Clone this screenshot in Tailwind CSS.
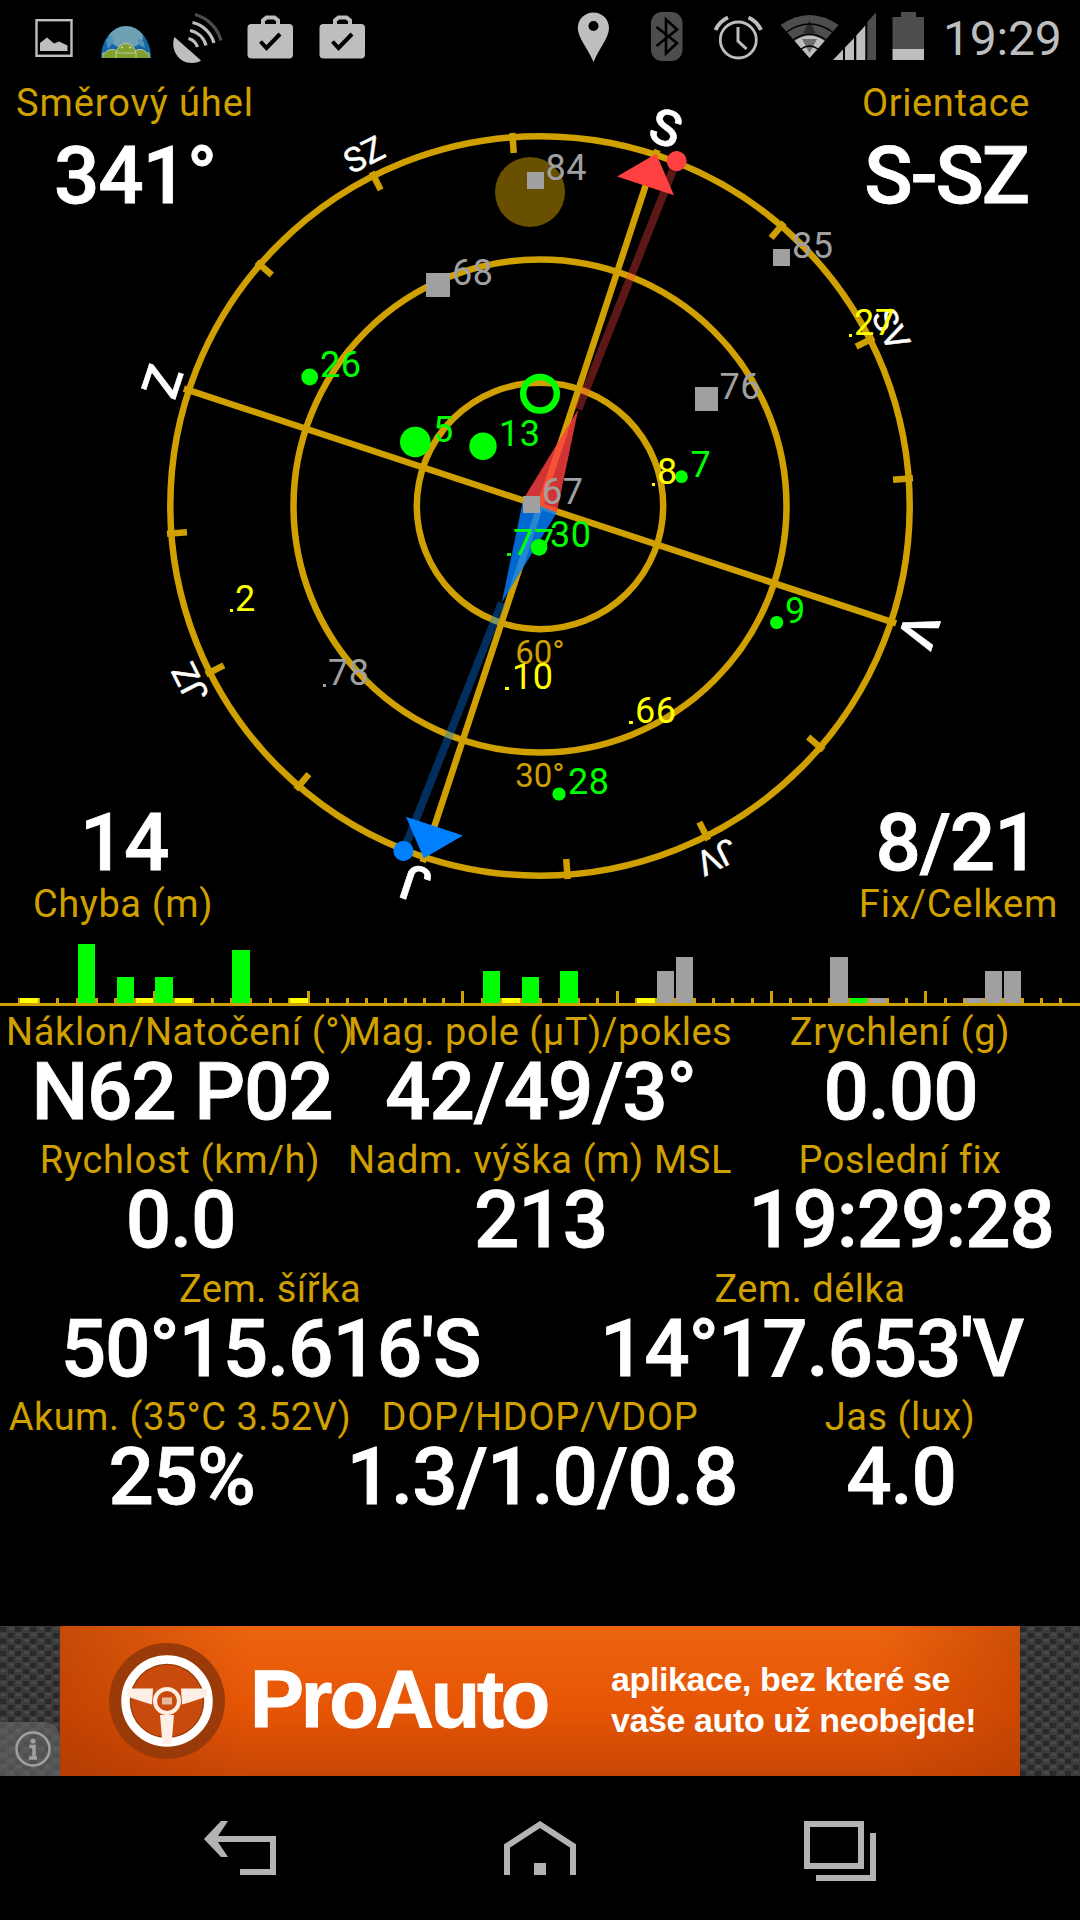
<!DOCTYPE html>
<html lang="cs">
<head>
    <meta charset="UTF-8">
    <meta name="viewport" content="width=device-width, initial-scale=1.0">
    <title>GPS Status</title>
    <script src="https://cdn.jsdelivr.net/npm/@tailwindcss/browser@4"></script>
</head>
<body class="bg-black w-[1080px] h-[1920px] overflow-hidden flex flex-col font-[Roboto,sans-serif]">

    <!-- Status bar -->
    <header class="h-[75px] shrink-0 flex justify-between">
        <svg class="w-[380px] h-[75px]" viewBox="0 0 380 75">
            <rect x="36.5" y="20.2" width="35" height="35.6" fill="none" stroke="#bebebe" stroke-width="2.4" />
            <path d="M40 51V43l7-5.5 7 6 5-2 8.5 4V51z" fill="#bebebe" />
            <!-- globe with androids -->
            <clipPath id="globe"><path d="M101 58a25 32 0 0 1 50 0z" /></clipPath>
            <g clip-path="url(#globe)">
                <rect x="100" y="25" width="52" height="34" fill="#1268a6" />
                <ellipse cx="126" cy="37" rx="17" ry="11" fill="#6fa0b4" />
                <path d="M106 40l5-5 3 6-6 8zM138 38l6 4 1 6-7-4z" fill="#4f93ba" />
                <g fill="#82a02f" stroke="#c3cfa2" stroke-width=".9">
                    <path d="M103 59v-6h2a8 7 0 0 1 14 0v6zM149 59v-6h-2a8 7 0 0 0-14 0v6z" />
                    <path d="M116 59v-7h20v7z" />
                    <path d="M116.500 53a9.500 9.500 0 0 1 19 0z" />
                </g>
                <circle cx="122" cy="47.500" r="1" fill="#ddd" />
                <circle cx="130" cy="47.500" r="1" fill="#ddd" />
            </g>
            <!-- dish -->
            <path d="M174.500 37C170 49 178 63 192 63c4 0 7-1 9-2.500z" fill="#bebebe" />
            <g fill="none" stroke="#bebebe" stroke-width="3.200">
                <path d="M188.500 38.500a13 13 0 0 1 9 8.500" />
                <path d="M190 30.500a21 21 0 0 1 16 15" />
                <path d="M192.500 22.500a29 29 0 0 1 21.500 20.500" />
                <path d="M195 14.500a37 37 0 0 1 26 26" stroke="#4d4d4d" />
            </g>
            <!-- store updates -->
            <g id="bag">
                <path d="M263 25v-4.500l3.500-3h8l3.500 3V25" fill="none" stroke="#bebebe" stroke-width="4" />
                <rect x="247.500" y="24" width="45.500" height="34.500" rx="4" fill="#bebebe" />
                <path d="M260.500 41.500l6 6.500 13.500-14" fill="none" stroke="#000" stroke-width="4" />
            </g>
            <use href="#bag" x="72" />
        </svg>
        <div class="flex">
            <svg class="w-[366px] h-[75px]" viewBox="570 0 366 75">
                <path fill-rule="evenodd" d="M593.500 12.500c-9 0-15.700 7-15.700 15.500 0 10 10 20 15.700 34 5.700-14 15.500-24 15.500-34 0-8.500-6.700-15.500-15.500-15.500zm0 8.500a5 5 0 1 1 0 10 5 5 0 0 1 0-10z" fill="#bebebe" />
                <rect x="651" y="12" width="31.500" height="49" rx="11" fill="#4d4d4d" />
                <path d="M656.500 27l20.500 16-11 10.500V19.500L677 29.500 656.500 46" fill="none" stroke="#000" stroke-width="2.600" />
                <g fill="none" stroke="#bebebe">
                    <circle cx="738.300" cy="40" r="18" stroke-width="2.800" />
                    <path d="M715.500 30a25 25 0 0 1 12.500-12.500M761 30a25 25 0 0 0-12.500-12.500" stroke-width="4" />
                    <path d="M738 27v14l8.500 8" stroke-width="3" />
                </g>
                <!-- wifi -->
                <path d="M809.600 58L780.600 25q29-20 58 0z" fill="#4d4d4d" />
                <path d="M809.600 58l-15-17q15-11 30 0z" fill="#bebebe" />
                <path d="M802 39h15l-7.500 14z" fill="#6e6e6e" />
                <path d="M809.500 20l-6 13h12z" fill="#2b2b2b" />
                <g fill="none" stroke="#000" stroke-width="1.400">
                    <path d="M786.500 32q23-16 46 0M793.500 39.500q16-10.500 32 0M801 49q8.500-6 17 0" />
                </g>
                <!-- signal -->
                <path d="M833 60l10-10.500V60zM845 60V47.500l9-9.500v22zM856.300 60V35.500l9-10V60z" fill="#bebebe" />
                <path d="M867.300 60V22l8.700-9.500V60z" fill="#4d4d4d" />
                <!-- battery -->
                <path d="M892.500 17h8.500v-5h15v5h8v32h-31.500z" fill="#4d4d4d" />
                <rect x="892.500" y="49" width="31.500" height="11" fill="#bebebe" />
            </svg>
            <span class="w-[144px] pl-[7px] text-[48px] leading-[78px] tracking-[-0.2px] text-[#bebebe]">19:29</span>
        </div>
    </header>

    <main class="h-[1551px] shrink-0">
        <!-- Radar -->
        <section class="grid h-[856px]">
            <svg class="col-start-1 row-start-1 w-[1080px] h-[856px]" viewBox="0 75 1080 856">
                <g transform="translate(540 506)" fill="none" stroke="#d0a000" stroke-width="6.500">
                    <circle r="369.700" />
                    <circle r="246.500" />
                    <circle r="123.200" />
                    <g transform="rotate(18.250)">
                        <path d="M0-375V375M-375 0H375" />
                        <g id="ticks">
                            <path d="M0-374v20" transform="rotate(22.500)" />
                            <path d="M0-374v20" transform="rotate(45)" />
                            <path d="M0-374v20" transform="rotate(67.500)" />
                        </g>
                        <use href="#ticks" transform="rotate(90)" />
                        <use href="#ticks" transform="rotate(180)" />
                        <use href="#ticks" transform="rotate(270)" />
                    </g>
                </g>
                <g fill="#d0a000" font-size="33" text-anchor="middle">
                    <text x="540" y="663.500">60°</text>
                    <text x="540" y="786.500">30°</text>
                </g>

                <g transform="translate(540 506) rotate(18.250)" fill="#fff" stroke="#fff" text-anchor="middle">
                    <g font-size="50" font-weight="500" stroke-width=".6">
                        <text x="1" y="-381">S</text>
                        <text y="-381" transform="rotate(90)">V</text>
                        <text y="-380" transform="rotate(180)">J</text>
                        <text y="-380" transform="rotate(270)">Z</text>
                    </g>
                    <g font-size="34" stroke-width=".5">
                        <text y="-381" transform="rotate(45)">SV</text>
                        <text y="-381" transform="rotate(135)">JV</text>
                        <text y="-380" transform="rotate(225)">JZ</text>
                        <text x="1" y="-381" transform="rotate(315)">SZ</text>
                    </g>
                </g>

                <!-- compass needle -->
                <g transform="translate(540 506) rotate(21.600)">
                    <path d="M0-104V-371" stroke="#ff4040" stroke-width="8" opacity=".37" />
                    <path d="M0 104V371" stroke="#0080ff" stroke-width="8" opacity=".37" />
                    <path d="M-18 0L0-104 18 0z" fill="#ff4040" opacity=".82" />
                    <path d="M-18 0L0 104 18 0z" fill="#0080ff" opacity=".82" />
                    <circle cy="-371" r="10" fill="#ff4040" />
                    <circle cy="371" r="10" fill="#0080ff" />
                </g>
                <g transform="translate(540 506) rotate(18.250)">
                    <path d="M0-371l30 34h-60z" fill="#ff4040" />
                    <path d="M0 371l30-34h-60z" fill="#0080ff" />
                </g>
                <circle cx="530" cy="192" r="35" fill="#d0a000" opacity=".5" />
                <circle cx="540" cy="393.700" r="16.800" fill="none" stroke="#0f0" stroke-width="6.500" />

                <!-- satellites -->
                <g fill="#a0a0a0" font-size="36" letter-spacing=".5">
                    <rect x="527" y="172" width="17" height="17" /><text x="545.500" y="180">84</text>
                    <rect x="426" y="273" width="24" height="24" /><text x="452" y="285">68</text>
                    <rect x="773" y="249" width="17" height="17" /><text x="792" y="258">85</text>
                    <rect x="695" y="387" width="23" height="24" /><text x="719.500" y="399">76</text>
                    <rect x="523" y="496" width="17" height="17" /><text x="542" y="504">67</text>
                    <rect x="323" y="684" width="3" height="3" /><text x="328" y="685">78</text>
                </g>
                <g fill="#0f0" font-size="36" letter-spacing=".5">
                    <circle cx="309.700" cy="377" r="8.400" /><text x="320" y="377">26</text>
                    <circle cx="415.300" cy="442" r="15.300" /><text x="433" y="442">5</text>
                    <circle cx="483" cy="446.300" r="13.700" /><text x="499" y="446">13</text>
                    <circle cx="681.500" cy="476.700" r="6.400" /><text x="690.500" y="477">7</text>
                    <circle cx="776.700" cy="622.500" r="6.600" /><text x="785" y="622.500">9</text>
                    <circle cx="559" cy="794" r="6.600" /><text x="568" y="794">28</text>
                    <rect x="507" y="553" width="4" height="3" /><text x="513" y="555">77</text>
                    <circle cx="539" cy="547.300" r="8.400" /><text x="550" y="547">30</text>
                </g>
                <g fill="#ff0" font-size="36" letter-spacing=".5">
                    <rect x="849" y="334" width="3" height="3" /><text x="854" y="335">27</text>
                    <rect x="652" y="483" width="3" height="3" /><text x="657" y="484">8</text>
                    <rect x="230" y="609" width="3" height="3" /><text x="235" y="611">2</text>
                    <rect x="505" y="687" width="4" height="3" /><text x="512" y="689">10</text>
                    <rect x="629" y="721" width="4" height="3" /><text x="635" y="722.500">66</text>
                </g>
            </svg>
            <div class="col-start-1 row-start-1 flex flex-col justify-between pt-[3px] text-center">
                <div class="flex justify-between">
                    <div class="w-[270px]">
                        <p class="text-[38px] leading-[50px] tracking-[0.9px] text-[#d0a000]">Směrový úhel</p>
                        <p class="mt-[13px] text-[80px] leading-[70px] font-medium tracking-[-1.2px] text-white [-webkit-text-stroke:0.8px_#fff]">341°</p>
                    </div>
                    <div class="w-[268px]">
                        <p class="text-[38px] leading-[50px] tracking-[0.6px] text-[#d0a000]">Orientace</p>
                        <p class="mt-[13px] text-[80px] leading-[70px] font-medium tracking-[-2.2px] text-white [-webkit-text-stroke:0.8px_#fff]">S-SZ</p>
                    </div>
                </div>
                <div class="flex justify-between">
                    <div class="w-[246px]">
                        <p class="mb-[1px] pl-[2px] text-[80px] leading-[70px] font-medium tracking-[-1.2px] text-white [-webkit-text-stroke:0.8px_#fff]">14</p>
                        <p class="mb-[2px] text-[38px] leading-[50px] tracking-[0.6px] text-[#d0a000]">Chyba (m)</p>
                    </div>
                    <div class="w-[243px]">
                        <p class="mb-[1px] mr-[3px] text-[80px] leading-[70px] font-medium tracking-[-1.2px] text-white [-webkit-text-stroke:0.8px_#fff]">8/21</p>
                        <p class="mb-[2px] text-[38px] leading-[50px] tracking-[0.8px] text-[#d0a000]">Fix/Celkem</p>
                    </div>
                </div>
            </div>
        </section>

        <!-- Signal levels -->
        <svg class="block w-[1080px] h-[76px]" viewBox="0 931 1080 76" shape-rendering="crispEdges">
            <g stroke="#d0a000">
                <path d="M17.800 1001H1070" stroke-width="6" stroke-dasharray="3 16.286" />
                <path d="M152.800 997.500H940" stroke-width="13" stroke-dasharray="3 151.286" />
            </g>
            <g fill="#0f0">
                <rect x="78" y="944" width="17" height="60" />
                <rect x="117" y="977" width="17" height="27" />
                <rect x="155" y="977" width="18" height="27" />
                <rect x="232" y="950" width="18" height="54" />
                <rect x="483" y="971" width="17" height="33" />
                <rect x="522" y="977" width="17" height="27" />
                <rect x="560" y="971" width="18" height="33" />
                <rect x="850" y="998" width="17" height="6" />
            </g>
            <g fill="#ff0">
                <rect x="20" y="998" width="18" height="6" />
                <rect x="136" y="998" width="17" height="6" />
                <rect x="175" y="998" width="17" height="6" />
                <rect x="290" y="998" width="18" height="6" />
                <rect x="502" y="998" width="18" height="6" />
                <rect x="637" y="998" width="18" height="6" />
            </g>
            <g fill="#a0a0a0">
                <rect x="657" y="971" width="17" height="33" />
                <rect x="676" y="957" width="17" height="47" />
                <rect x="830" y="957" width="18" height="47" />
                <rect x="869" y="998" width="17" height="6" />
                <rect x="965" y="998" width="18" height="6" />
                <rect x="985" y="971" width="17" height="33" />
                <rect x="1004" y="971" width="17" height="33" />
            </g>
            <rect y="1003" width="1080" height="3" fill="#d0a000" />
        </svg>

        <!-- Readings -->
        <dl class="grid grid-cols-6 auto-rows-[128.4px] text-center whitespace-nowrap">
            <div class="col-span-2 flex flex-col items-center">
                <dt class="text-[38px] leading-[50px] tracking-[0.6px] text-[#d0a000]">Náklon/Natočení (°)</dt>
                <dd class="pl-[4px] text-[80px] leading-[70px] font-medium tracking-[-1.2px] text-white [-webkit-text-stroke:0.8px_#fff]">N62 P02</dd>
            </div>
            <div class="col-span-2 flex flex-col items-center">
                <dt class="text-[38px] leading-[50px] tracking-[0.5px] text-[#d0a000]">Mag. pole (µT)/pokles</dt>
                <dd class="pl-[1px] text-[80px] leading-[70px] font-medium tracking-[-1.2px] text-white [-webkit-text-stroke:0.8px_#fff]">42/49/3°</dd>
            </div>
            <div class="col-span-2 flex flex-col items-center">
                <dt class="text-[38px] leading-[50px] tracking-[0.7px] text-[#d0a000]">Zrychlení (g)</dt>
                <dd class="pl-[1px] text-[80px] leading-[70px] font-medium tracking-[-1.2px] text-white [-webkit-text-stroke:0.8px_#fff]">0.00</dd>
            </div>
            <div class="col-span-2 flex flex-col items-center">
                <dt class="text-[38px] leading-[50px] tracking-[0.7px] text-[#d0a000]">Rychlost (km/h)</dt>
                <dd class="pl-[1px] text-[80px] leading-[70px] font-medium tracking-[-1.2px] text-white [-webkit-text-stroke:0.8px_#fff]">0.0</dd>
            </div>
            <div class="col-span-2 flex flex-col items-center">
                <dt class="text-[38px] leading-[50px] tracking-[0.6px] text-[#d0a000]">Nadm. výška (m) MSL</dt>
                <dd class="pl-[1px] text-[80px] leading-[70px] font-medium tracking-[-1.2px] text-white [-webkit-text-stroke:0.8px_#fff]">213</dd>
            </div>
            <div class="col-span-2 flex flex-col items-center">
                <dt class="text-[38px] leading-[50px] tracking-[0.5px] text-[#d0a000]">Poslední fix</dt>
                <dd class="pl-[2px] text-[80px] leading-[70px] font-medium tracking-[-1.2px] text-white [-webkit-text-stroke:0.8px_#fff]">19:29:28</dd>
            </div>
            <div class="col-span-3 flex flex-col items-center">
                <dt class="text-[38px] leading-[50px] tracking-[0.5px] text-[#d0a000]">Zem. šířka</dt>
                <dd class="pl-[1px] text-[80px] leading-[70px] font-medium tracking-[-1.2px] text-white [-webkit-text-stroke:0.8px_#fff]">50°15.616'S</dd>
            </div>
            <div class="col-span-3 flex flex-col items-center">
                <dt class="text-[38px] leading-[50px] tracking-[0.5px] text-[#d0a000]">Zem. délka</dt>
                <dd class="pl-[3px] text-[80px] leading-[70px] font-medium tracking-[-1.2px] text-white [-webkit-text-stroke:0.8px_#fff]">14°17.653'V</dd>
            </div>
            <div class="col-span-2 flex flex-col items-center">
                <dt class="text-[38px] leading-[50px] tracking-[0.5px] text-[#d0a000]">Akum. (35°C 3.52V)</dt>
                <dd class="pl-[3px] text-[80px] leading-[70px] font-medium tracking-[-1.2px] text-white [-webkit-text-stroke:0.8px_#fff]">25%</dd>
            </div>
            <div class="col-span-2 flex flex-col items-center">
                <dt class="text-[38px] leading-[50px] tracking-[0.7px] text-[#d0a000]">DOP/HDOP/VDOP</dt>
                <dd class="pl-[4px] text-[80px] leading-[70px] font-medium tracking-[-1px] text-white [-webkit-text-stroke:0.8px_#fff]">1.3/1.0/0.8</dd>
            </div>
            <div class="col-span-2 flex flex-col items-center">
                <dt class="text-[38px] leading-[50px] tracking-[0.5px] text-[#d0a000]">Jas (lux)</dt>
                <dd class="pl-[2px] text-[80px] leading-[70px] font-medium tracking-[-1.2px] text-white [-webkit-text-stroke:0.8px_#fff]">4.0</dd>
            </div>
        </dl>
    </main>

    <!-- Ad banner -->
    <aside class="h-[150px] shrink-0 flex font-['Liberation_Sans',sans-serif]">
        <svg class="w-[60px] h-[150px]" viewBox="0 0 60 150">
            <defs>
                <pattern id="mesh" width="15" height="12" patternUnits="userSpaceOnUse">
                    <rect width="15" height="12" fill="#3b3b3b" />
                    <path d="M0 1h6v5H0zM8 7h6v5H8z" fill="#292929" />
                    <path d="M9 1h5v3H9zM1 7h5v3H1z" fill="#484848" />
                </pattern>
            </defs>
            <rect width="60" height="150" fill="url(#mesh)" />
            <path d="M0 96h42q18 0 18 18v36H0z" fill="#6a6a6a" opacity=".6" />
            <circle cx="33" cy="123" r="16.500" fill="none" stroke="#a0a0a0" stroke-width="2.500" />
            <circle cx="33" cy="115" r="2.500" fill="#a0a0a0" />
            <path d="M29.500 120.500h4.500V131M29 132h8" fill="none" stroke="#a0a0a0" stroke-width="3.500" />
        </svg>
        <div class="w-[960px] flex items-start bg-[linear-gradient(90deg,#a0320080_0,#a0320000_20%,#a0320000_85%,#b03a0080_100%),linear-gradient(180deg,#ec640f_0,#e65505_55%,#c94706_100%)]">
            <svg class="w-[190px] h-[150px]" viewBox="60 1626 190 150">
                <circle cx="167" cy="1701" r="58" fill="#9a3a08" />
                <circle cx="167" cy="1701" r="36" fill="#c84a0c" />
                <circle cx="167" cy="1701" r="41.500" fill="none" stroke="#fff" stroke-width="8.500" />
                <path d="M127 1688.500h26l-1 16-7-2-18-6zM207 1688.500h-26l1 16 7-2 18-6zM160 1715h14l-2.500 29h-9z" fill="#fdeee6" />
                <circle cx="167" cy="1701" r="12" fill="#c84a0c" stroke="#fdeee6" stroke-width="4" />
                <rect x="162" y="1697.500" width="10" height="7" fill="#e8b9a2" />
            </svg>
            <p class="w-[301px] mt-[26px] text-[81px] leading-[95px] font-bold tracking-[-3.2px] text-white [-webkit-text-stroke:1px_#fff]">ProAuto</p>
            <p class="pt-[33px] pl-[60px] text-[34px] leading-[41px] font-bold tracking-[-0.4px] text-white whitespace-nowrap">aplikace, bez které se<br>vaše auto už neobejde!</p>
        </div>
        <svg class="w-[60px] h-[150px]" viewBox="0 0 60 150">
            <rect width="60" height="150" fill="url(#mesh)" />
        </svg>
    </aside>

    <!-- Navigation bar -->
    <nav class="h-[144px] shrink-0 flex justify-between items-start pt-[45px] px-[204px]">
        <svg class="w-[72px] h-[60px]" viewBox="0 0 72 60" fill="none" stroke="#b3b3b3" stroke-width="6">
            <path d="M36 51h33V18H8" />
            <path d="M17 0h7L12 18l12 18h-7L0 18z" fill="#b3b3b3" stroke="none" />
        </svg>
        <svg class="w-[72px] h-[60px]" viewBox="0 0 72 60">
            <path d="M3 54V25L36 3.500 69 25v29" fill="none" stroke="#b3b3b3" stroke-width="6" />
            <rect x="30" y="42" width="12" height="12" fill="#b3b3b3" />
        </svg>
        <svg class="w-[72px] h-[60px]" viewBox="0 0 72 60" fill="none" stroke="#b3b3b3" stroke-width="6">
            <rect x="3" y="3" width="54" height="42" />
            <path d="M12 57h57V12" />
        </svg>
    </nav>
</body>
</html>
